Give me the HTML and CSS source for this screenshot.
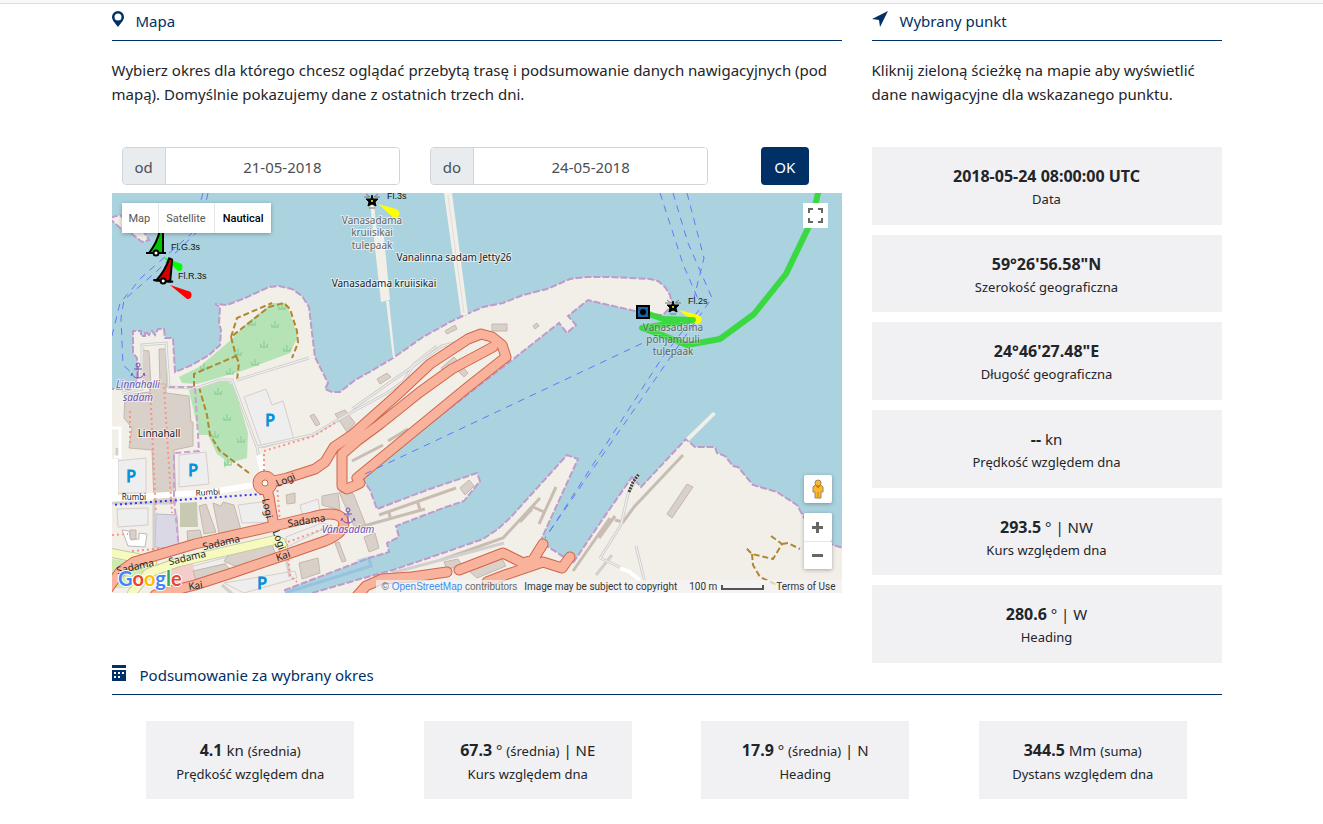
FILE: index.html
```html
<!DOCTYPE html>
<html lang="pl">

<head>
    <meta charset="utf-8">
    <title>Mapa</title>
    <link rel="stylesheet" href="styles.css">
</head>

<body>
    <div class="topbar"></div>
    <div class="container">
        <div class="columns">
            <div class="main">
                <h2 class="heading">
                    <svg class="icon" width="14" height="18" viewBox="0 0 14 18">
                        <path fill-rule="evenodd" d="M6 1a6 6 0 0 1 6 6c0 3-3 6-6 10C3 13 0 10 0 7a6 6 0 0 1 6-6zm0 2.500a3.500 3.500 0 1 0 0 7 3.500 3.500 0 0 0 0-7z" />
                    </svg>
                    <span>Mapa</span>
                </h2>
                <p class="intro">Wybierz okres dla którego chcesz oglądać przebytą trasę i podsumowanie danych nawigacyjnych (pod mapą). Domyślnie pokazujemy dane z ostatnich trzech dni.</p>
                <form class="period">
                    <div class="input-group">
                        <label for="from">od</label>
                        <input id="from" type="text" value="21-05-2018">
                    </div>
                    <div class="input-group">
                        <label for="to">do</label>
                        <input id="to" type="text" value="24-05-2018">
                    </div>
                    <div class="submit">
                        <button type="button">OK</button>
                    </div>
                </form>

                <div class="map">
                    <svg class="tiles" viewBox="0 0 730 400" preserveAspectRatio="xMidYMid slice">
                        <defs>
                            <path id="coast" d="M-5 196H18L25 188V165L21 160V138H29V143H33V138L37 142L40 138L43 142L46 136H52L53 145H61L63 179L80 172L97 162L108 152L109 137L107 130L108 114L103 111L115 112L133 105L157 94L167 93L180 96L190 103L197 114L200 140L203 164L213 184L216 190L213 196L220 199L228 199L243 187L261 177L281 165L311 144L338 129L355 121L371 114L391 110L411 102L435 96L458 86L475 84L498 84L538 86L546 88L553 94L558 102L560 112L551 122L536 121L488 110L476 107L456 123L464 132L455 140L447 130L400 167L265 272L251 287L258 297L265 316L315 297L365 280L368 288L352 308L331 315L284 333L287 344L275 350L277 359L257 365L173 397V405H-5z" />
                            <path id="south" d="M200 400L248 386L281 377L331 360L371 346L386 336L398 325L455 262L466 266L428 349L438 355L461 370L488 330L520 284L529 294L574 246L583 254L603 254L605 260L613 263L621 273L626 274L641 292L665 299L685 312L694 328L706 345L721 352L735 356V405H200z" />
                            <path id="roads" d="M153 290L175 285L203 276L213 269L222 254L240 242L285 202L318 171L356 146L369 141L380 144L390 152L394 164L356 194L245 285L248 290L242 293L235 296L230 293V261L245 248L268 231L308 199L340 176L381 154M153 290L157 304L162 334M-5 397L8 379L22 369L83 351L162 333L200 324Q230 316 232 330Q232 340 213 348L170 363L117 381L83 392L43 402M245 403L254 393L270 386L300 384L335 379M347 377L391 360L411 370M375 389L393 382L431 369L450 375L458 364M411 370L421 367L431 351" />
                            <path id="yellow" d="M-5 359L25 365L40 370M20 400L36 380L67 369L115 358L163 347L169 349L172 358" />
                            <g id="grass" class="grass">
                                <path d="M-4 3H4M-2 3L-4 0M0 3V-3M2 3L4 0" />
                            </g>
                            <g id="anchor" class="anchor">
                                <circle cy="-6" r="2" />
                                <path d="M0-4V7M-4-2H4M-6 2Q-5 7 0 7Q5 7 6 2M-6 2L-7 5M6 2L7 5" />
                            </g>
                            <g id="beacon">
                                <path class="rays" d="M-8-4L-3-4M8-4L3-4M-6-7L-2-4M6-7L2-4M-3 7H3" />
                                <path class="star" d="M0-6L1-2H6L3 1L4 5L0 3L-4 5L-3 1L-6-2H-1z" />
                                <circle r="1" fill="#ff0" />
                            </g>
                            <g id="buoy">
                                <path d="M4-14L7-13L7 9H-7Q1-1 4-14z" />
                                <path d="M-10 9H10" />
                                <circle cy="9" r="2.500" fill="#fff" />
                            </g>
                        </defs>

                        <rect width="730" height="400" fill="#aad3df" />
                        <path class="coast" d="M-3 25L8 35L20 41L30 49L37 47L32 39L22 35L8 22z" />
                        <use href="#coast" class="coast" />
                        <use href="#south" class="coast" />

                        <!-- jetties -->
                        <g fill="#f2efe9">
                            <path d="M258 10L262 10L265 40L272 44L278 107L269 109z" />
                            <path d="M274 108L277 108L283 165H281z" />
                            <path d="M332 0H340L356 122H349z" />
                            <path d="M574 245L601 219L604 221L577 248z" />
                        </g>
                        <path d="M336 3L352 120" fill="none" stroke="#ddd" />

                        <!-- parks -->
                        <g fill="#b5e3b5">
                            <path d="M67 184L87 174L119 147L135 130L160 110L174 110L186 143L178 160L130 178L85 191L70 190z" />
                            <path d="M77 197L95 190L115 187L122 193L136 240L135 265L117 270L112 275V266L105 261L96 242H87z" />
                        </g>
                        <use href="#grass" x="170" y="113" /><use href="#grass" x="140" y="129" />
                        <use href="#grass" x="163" y="131" /><use href="#grass" x="152" y="151" />
                        <use href="#grass" x="175" y="155" /><use href="#grass" x="126" y="159" />
                        <use href="#grass" x="143" y="169" /><use href="#grass" x="92" y="173" />
                        <use href="#grass" x="118" y="178" /><use href="#grass" x="106" y="198" />
                        <use href="#grass" x="115" y="224" /><use href="#grass" x="129" y="246" />
                        <use href="#grass" x="103" y="241" /><use href="#grass" x="116" y="269" />
                        <g class="footpath">
                            <path d="M82 194V181L124 163L119 144L157 114L172 110L178 116L185 138L186 150L180 165M124 163L127 170L125 187M119 144L125 125L160 110M87 194L95 222L98 242L108 258L137 280" />
                            <path d="M659 343L670 351L661 366L640 361L633 354M640 361L641 372L648 384L665 392M670 351L676 350L688 356" />
                        </g>

                        <!-- parking areas -->
                        <g class="parking">
                            <path d="M132 204L154 196L160 212L171 208L182 246L150 255z" />
                            <path d="M4 268L34 265V300H4z" />
                            <path d="M67 262L94 259L97 291L67 294z" />
                            <path d="M5 316L36 315V332L6 334z" />
                            <path d="M126 312L158 308L161 329L130 330z" />
                            <path d="M188 312L206 306L208 318L190 321z" />
                            <path d="M112 390L183 378L185 385L132 400z" />
                            <path d="M78 374L115 364V370L79 379z" />
                            <path d="M174 344L210 330L219 332L175 354z" />
                        </g>
                        <path d="M60 370L80 367L85 388L58 392z" fill="#f3cdc9" />
                        <path d="M0 366L28 370L38 385L20 395H0z" fill="#cdebb0" />
                        <path d="M68 310L85 309L86 334H68z" fill="#c8c9b2" />
                        <path d="M44 321L65 322L67 358L43 354z" fill="#d9d8e4" stroke="#bbb9c8" />
                        <path d="M10 337L17 338L19 347L27 346V340L35 341L33 354L16 353z" fill="#fff" stroke="#bbb" />

                        <!-- buildings -->
                        <g class="building">
                            <path d="M18 337H24V346H18z" />
                            <path d="M30 157L37 158L39 193L31 191z" />
                            <path d="M47 156H54L55 194H48z" />
                            <path d="M13 202L38 199V191H54V200L77 203L79 229H81V253L62 257L64 310H42L40 257L17 255L20 235L12 225z" />
                            <path d="M87 313L94 311L104 339L92 341z" />
                            <path d="M101 310L109 313L111 309L122 312L129 337L107 340z" />
                            <path d="M75 338L88 337L91 350L76 351z" />
                            <path d="M118 360L160 352L164 362L125 374L112 368z" />
                            <path d="M81 378L113 371L120 378L84 387z" />
                            <path d="M174 302L183 300L183 310L175 311z" />
                            <path d="M210 303L226 300L228 317L210 312z" />
                            <path d="M227 299L241 300L255 335L242 333z" />
                            <path d="M187 370L206 365L208 380L190 386z" />
                            <path d="M252 344L263 340L267 355L257 359z" />
                            <path d="M223 350L227 349L234 368L230 369z" />
                            <path d="M223 221L233 217L243 230L235 239z" />
                            <path d="M198 223L202 221L208 231L204 233z" />
                            <path d="M265 186L275 180L279 184L268 191z" />
                            <path d="M333 138L343 132L345 136L335 141z" />
                            <path d="M380 131H395V138H380z" />
                            <path d="M421 133L425 130L427 133L423 136z" />
                            <path d="M329 175L342 164L356 180L352 184L345 177L332 180z" />
                            <path d="M348 295L357 287L362 293L353 302z" />
                            <path d="M332 369L346 366L350 373L335 376z" />
                            <path d="M357 378L390 366L394 373L365 385z" />
                            <path d="M555 321L575 291L581 294L560 325z" />
                        </g>
                        <g class="pier">
                            <path d="M267 322L344 295M248 334L313 316M277 320L279 327M306 310L308 317" />
                            <path d="M329 367L391 345L428 305M427 331L444 294M421 314L432 319M408 329L420 316" />
                            <path d="M487 345L503 323M503 327L511 329L522 314L571 262M461 378L498 325" />
                            <path d="M240 268L271 252M276 248L296 236" />
                        </g>

                        <!-- minor streets -->
                        <g class="street-casing">
                            <path d="M5 310V255M10 200L30 196V152L54 150L57 194L85 195L108 187L120 187L145 254L200 242L238 220L275 200L292 188L302 171L325 153M125 187L197 165M240 216L330 153L350 148M145 254L150 285M42 310V385L20 384M0 310L60 310" />
                            <path d="M488 365L509 332L516 301L527 281M488 365L520 380L530 394M524 353L533 390" />
                            <path d="M110 392L125 405M280 380L392 350M500 362L484 382M178 384L172 355" />
                        </g>
                        <g class="street-casing inner">
                            <path d="M10 200L30 196V152L54 150L57 194L85 195L108 187L120 187L145 254L200 242L238 220L275 200L292 188L302 171L325 153M125 187L197 165M240 216L330 153L350 148M145 254L150 285" />
                            <path d="M488 365L509 332L516 301L527 281M488 365L520 380L530 394M524 353L533 390" />
                        </g>
                        <path d="M517 299L521 289L527 281" class="bridge" />
                        <path d="M0 235H8V264H2" fill="none" stroke="#fff" stroke-width="3" />
                        <g class="street">
                            <path d="M-3 306L40 303L100 299L147 291M147 262L153 290M3 305V266" />
                        </g>
                        <path d="M508 375L518 379L528 388" fill="none" stroke="#fff" stroke-width="4" />
                        <g class="steps">
                            <path d="M18 218V250M38 195L44 320M52 194L60 320M152 288V258L202 243L226 228M165 292L168 330M175 351L178 383L185 389M176 349L222 332M0 342L16 341M20 358L65 354" />
                        </g>
                        <path d="M-2 312L150 301" class="cycle" />
                        <path d="M57 194H83L87 258L62 260V306L67 356L30 372" class="border" />

                        <!-- main roads -->
                        <use href="#yellow" class="yellow-casing" />
                        <use href="#yellow" class="yellow" />
                        <use href="#roads" class="road-casing" />
                        <circle cx="153" cy="290" r="12" fill="#f9b29c" stroke="#cf6649" />
                        <use href="#roads" class="road" />
                        <circle cx="153" cy="290" r="3" fill="#fff" stroke="#cf6649" />
                        <path d="M246 368L257 365L259 373L173 400" fill="none" stroke="#8aaee6" stroke-width="3" opacity=".5" />

                        <!-- ferry lines -->
                        <g class="ferry">
                            <path d="M96 0L88 36L45 78L12 107L9 125L11 172L20 180M91 0L80 40L30 84L8 110L0 143" />
                            <path d="M548 0L571 71L586 106M561 0L576 50L600 105L560 162L433 345M575 0L592 65L582 105M587 117L550 165L436 341" />
                            <path d="M253 281L272 272L533 149" />
                        </g>

                        <!-- navigation lights -->
                        <use href="#beacon" x="260" y="8" />
                        <use href="#beacon" x="561" y="114" />
                        <path d="M266 11L284 16A4 4 0 0 1 282 25z" fill="#ff0" />
                        <path d="M567 117L586 122A4 4 0 0 1 584 131z" fill="#ff0" />
                        <path d="M51 64L67 70A4 4 0 0 1 66 78z" fill="#0f0" />
                        <path d="M58 92L76 98A4 4 0 0 1 75 106z" fill="#f00" />
                        <g class="buoy">
                            <use href="#buoy" x="44" y="51" fill="#00c800" />
                            <use href="#buoy" transform="translate(52 79) rotate(5)" fill="#d40000" />
                        </g>

                        <!-- travelled track -->
                        <path d="M531 119L551 126L581 127L530 135L550 142L575 152L608 146L642 121L674 81L700 27L706 0" class="track" />

                        <g class="place">
                            <text x="260" y="31">Vanasadama</text>
                            <text x="260" y="43">kruiisikai</text>
                            <text x="260" y="56">tulepaak</text>
                            <g class="bare">
                                <text x="561" y="138">Vanasadama</text>
                                <text x="561" y="150">põhjamuuli</text>
                                <text x="561" y="162">tulepaak</text>
                            </g>
                        </g>
                        <g class="place dark">
                            <text x="342" y="68">Vanalinna sadam Jetty26</text>
                            <text x="272" y="94">Vanasadama kruiisikai</text>
                            <text x="47" y="244">Linnahall</text>
                        </g>
                        <g class="place harbour">
                            <text x="26" y="195">Linnahalli</text>
                            <text x="26" y="208">sadam</text>
                            <text x="236" y="340">Vanasadam</text>
                        </g>
                        <use href="#anchor" x="26" y="178" />
                        <use href="#anchor" x="236" y="323" />
                        <g class="parking-sign">
                            <text x="158" y="233">P</text>
                            <text x="81" y="283">P</text>
                            <text x="19" y="289">P</text>
                            <text x="150" y="396">P</text>
                        </g>
                        <g class="street-name">
                            <text transform="translate(175 290) rotate(-24)">Logi</text>
                            <text transform="translate(152 316) rotate(78)">Logi</text>
                            <text transform="translate(164 348) rotate(70)">Logi</text>
                            <text transform="translate(195 331) rotate(-9)">Sadama</text>
                            <text transform="translate(110 353) rotate(-13)">Sadama</text>
                            <text transform="translate(76 368) rotate(-13)">Sadama</text>
                            <text transform="translate(24 377) rotate(-13)">Sadama</text>
                            <text transform="translate(172 366) rotate(-18)">Kai</text>
                            <text transform="translate(84 396) rotate(-9)">Kai</text>
                            <text class="small" x="22" y="307">Rumbi</text>
                            <text class="small" transform="translate(96 302) rotate(-3)">Rumbi</text>
                        </g>
                        <g class="light">
                            <text x="275" y="6">Fl.3s</text>
                            <text x="59" y="57">Fl.G.3s</text>
                            <text x="66" y="86">Fl.R.3s</text>
                            <text x="576" y="111">Fl.2s</text>
                        </g>
                        <rect x="525" y="113" width="12" height="12" fill="#1463a8" stroke="#000" stroke-width="2" />
                        <circle cx="531" cy="119" r="3" />

                        <text class="google" x="6" y="393"><tspan fill="#4285f4">G</tspan><tspan fill="#ea4335">o</tspan><tspan fill="#fbbc05">o</tspan><tspan fill="#4285f4">g</tspan><tspan fill="#34a853">l</tspan><tspan fill="#ea4335">e</tspan></text>
                    </svg>

                    <div class="map-types">
                        <button type="button">Map</button>
                        <button type="button">Satellite</button>
                        <button type="button" class="active">Nautical</button>
                    </div>
                    <button type="button" class="fullscreen" aria-label="Fullscreen">
                        <svg width="15" height="15" viewBox="0 0 15 15">
                            <path d="M1 5V1H5M10 1H14V5M14 10V14H10M5 14H1V10" fill="none" stroke="#666" stroke-width="2" />
                        </svg>
                    </button>
                    <div class="map-controls">
                        <button type="button" aria-label="Street View">
                            <svg width="14" height="20" viewBox="0 0 14 20">
                                <g fill="#fbb829" stroke="#9a8760">
                                    <path d="M4 6H10L12 8V13H10V19H4V13H2V8z" />
                                    <circle cx="7" cy="4" r="3" />
                                </g>
                                <path d="M5 7H9L7 9zM7 13V19" fill="#e5762c" stroke="#c98419" />
                            </svg>
                        </button>
                        <div class="zoom">
                            <button type="button" aria-label="Zoom in">
                                <svg width="11" height="11" viewBox="0 0 11 11"><path d="M0 4H4V0H7V4H11V7H7V11H4V7H0z" fill="#666" /></svg>
                            </button>
                            <button type="button" aria-label="Zoom out">
                                <svg width="11" height="11" viewBox="0 0 11 11"><path d="M0 4H11V7H0z" fill="#666" /></svg>
                            </button>
                        </div>
                    </div>
                    <div class="attribution">
                        <span class="osm">© <a href="#">OpenStreetMap</a> contributors</span>
                        <span>Image may be subject to copyright</span>
                        <span class="scale">100 m <i></i></span>
                        <a href="#">Terms of Use</a>
                    </div>
                </div>
            </div>

            <div class="side">
                <h2 class="heading">
                    <svg class="icon" width="18" height="18" viewBox="0 0 18 18">
                        <path d="M16 1L8 17L7 10L0 9z" />
                    </svg>
                    <span>Wybrany punkt</span>
                </h2>
                <p class="intro">Kliknij zieloną ścieżkę na mapie aby wyświetlić dane nawigacyjne dla wskazanego punktu.</p>
                <div class="point">
                    <div class="card"><div><b>2018-05-24 08:00:00 UTC</b></div><small>Data</small></div>
                    <div class="card"><div><b>59°26'56.58"N</b></div><small>Szerokość geograficzna</small></div>
                    <div class="card"><div><b>24°46'27.48"E</b></div><small>Długość geograficzna</small></div>
                    <div class="card"><div><b>--</b> kn</div><small>Prędkość względem dna</small></div>
                    <div class="card"><div><b>293.5</b> ° | NW</div><small>Kurs względem dna</small></div>
                    <div class="card"><div><b>280.6</b> ° | W</div><small>Heading</small></div>
                </div>
            </div>
        </div>

        <h2 class="heading">
            <svg class="icon" width="18" height="18" viewBox="0 0 18 18">
                <path fill-rule="evenodd" d="M0 1H14V4H0zM0 6H14V17H0zM2 8V10H4V8zM6 8V10H8V8zM10 8V10H12V8zM2 12V14H4V12zM6 12V14H8V12z" />
            </svg>
            <span>Podsumowanie za wybrany okres</span>
        </h2>
        <div class="summary">
            <div class="card"><div><b>4.1</b> kn <small>(średnia)</small></div><small>Prędkość względem dna</small></div>
            <div class="card"><div><b>67.3</b> ° <small>(średnia)</small> | NE</div><small>Kurs względem dna</small></div>
            <div class="card"><div><b>17.9</b> ° <small>(średnia)</small> | N</div><small>Heading</small></div>
            <div class="card"><div><b>344.5</b> Mm <small>(suma)</small></div><small>Dystans względem dna</small></div>
        </div>
    </div>
</body>

</html>
```
FILE: styles.css
```css
* {
    box-sizing: border-box;
}

body {
    margin: 0;
    font-family: "Noto Sans", "Open Sans", sans-serif;
    font-size: 15px;
    line-height: 24px;
    color: #212529;
    background-color: #fff;
}

button,
input {
    font-family: inherit;
}

.topbar {
    height: 4px;
    background-color: #f8f8f8;
    border-bottom: 1px solid #ddd;
}

.container {
    max-width: 1120px;
    margin: 0 auto;
    padding: 5px 0 24px 10px;
}

.columns {
    display: grid;
    grid-template-columns: 730fr 350fr;
    gap: 30px;
}

.heading {
    display: flex;
    align-items: center;
    gap: 10px;
    margin: 0;
    padding-bottom: 7px;
    border-bottom: 1px solid #003066;
    font-size: 15px;
    font-weight: normal;
    color: #003066;
}

.icon {
    fill: #003066;
    margin-bottom: 4px;
}

.intro {
    margin: 17px 0 41px;
}

/* period form */

.period {
    display: grid;
    grid-template-columns: 5fr 5fr 2fr;
    margin: 0 -5px 8px;
}

.input-group {
    display: flex;
    height: 38px;
    margin: 0 15px;
    border: 1px solid #ced4da;
    border-radius: 4px;
    overflow: hidden;
}

.input-group label {
    padding: 7px 12px;
    color: #495057;
    background-color: #e9ecef;
    border-right: 1px solid #ced4da;
}

.input-group input {
    flex: 1;
    min-width: 0;
    padding: 2px 0 0;
    border: none;
    font-size: 15px;
    text-align: center;
    color: #495057;
}

.submit {
    text-align: center;
}

.submit button {
    height: 38px;
    width: 48px;
    padding: 2px 0 0;
    border: none;
    border-radius: 4px;
    font-size: 15px;
    color: #fff;
    background-color: #003066;
}

/* map */

.map {
    position: relative;
    height: 400px;
    overflow: hidden;
    font-family: Roboto, sans-serif;
}

.map button {
    display: flex;
    align-items: center;
    justify-content: center;
    padding: 0;
    border: none;
    background-color: #fff;
    cursor: pointer;
}

.tiles {
    display: block;
    width: 100%;
    height: 100%;
}

.coast {
    fill: #f2efe9;
    stroke: #c09acb;
    stroke-width: 2;
    stroke-dasharray: 7 2;
}

.border {
    fill: none;
    stroke: #c9a0d0;
    stroke-width: 2;
    stroke-dasharray: 6 3;
}

.grass {
    fill: none;
    stroke: #86cb93;
}

.footpath {
    fill: none;
    stroke: #b08630;
    stroke-width: 2;
    stroke-dasharray: 6 3;
}

.parking {
    fill: #eee;
    stroke: #d9cccb;
}

.building {
    fill: #d9d0c9;
    stroke: #c4b8ad;
}

.pier {
    fill: none;
    stroke: #c9bcb3;
    stroke-width: 3;
}

.street-casing {
    fill: none;
    stroke: #d2d0ce;
    stroke-width: 3;
}

.street-casing.inner {
    stroke: #f4f4f4;
    stroke-width: 1;
}

.street {
    fill: none;
    stroke: #fff;
    stroke-width: 6;
}

.bridge {
    fill: none;
    stroke: #444;
    stroke-width: 3;
    stroke-dasharray: 2 1;
}

.steps {
    fill: none;
    stroke: #fa9488;
    stroke-width: 2;
    stroke-dasharray: 2 3;
}

.cycle {
    stroke: #3333f5;
    stroke-width: 2;
    stroke-dasharray: 2 3;
}

.road,
.road-casing,
.yellow,
.yellow-casing {
    fill: none;
    stroke-linejoin: round;
    stroke-linecap: round;
}

.road {
    stroke: #f9b29c;
    stroke-width: 9;
}

.road-casing {
    stroke: #cf6649;
    stroke-width: 11;
}

.yellow {
    stroke: #f7fabf;
    stroke-width: 8;
}

.yellow-casing {
    stroke: #c5c99a;
    stroke-width: 10;
}

.ferry {
    fill: none;
    stroke: #6676fb;
    stroke-dasharray: 7 6;
}

.anchor {
    fill: none;
    stroke: #7356b8;
}

.star {
    stroke: #000;
}

.rays {
    stroke: #777;
}

.buoy {
    stroke: #000;
    stroke-width: 2;
}

.place,
.street-name {
    font-family: "Noto Sans", sans-serif;
    font-size: 10px;
    text-anchor: middle;
    fill: #666;
    stroke: #fff;
    stroke-opacity: 0.6;
    stroke-width: 2;
    paint-order: stroke;
}

.bare {
    stroke-opacity: 0.2;
}

.dark {
    fill: #222;
}

.harbour {
    font-style: italic;
    fill: #6b4fb3;
}

.street-name {
    fill: #222;
    stroke: none;
}

.street-name .small {
    font-size: 8px;
}

.parking-sign {
    font-family: "Noto Sans", sans-serif;
    font-size: 16px;
    text-anchor: middle;
    fill: #0092da;
    stroke: #0092da;
}

.light {
    font-family: "Liberation Sans", sans-serif;
    font-size: 9px;
    fill: #111;
}

.track {
    fill: none;
    stroke: #27d927;
    stroke-opacity: 0.85;
    stroke-width: 6;
    stroke-linejoin: round;
    stroke-linecap: round;
}

.google {
    font-family: Lato, sans-serif;
    font-size: 20px;
    font-weight: bold;
    stroke: #fff;
    stroke-width: 2;
    paint-order: stroke;
}

.map-types {
    position: absolute;
    top: 10px;
    left: 10px;
    display: flex;
    border-radius: 2px;
    box-shadow: 0 1px 4px rgba(0, 0, 0, 0.3);
}

.map .map-types button {
    height: 30px;
    padding: 0 8px 0 7px;
    font-size: 11px;
    color: #565656;
    border-right: 1px solid #e6e6e6;
}

.map .map-types .active {
    padding: 0 8px;
    font-weight: 500;
    color: #000;
    border-right: none;
}

.map .fullscreen {
    position: absolute;
    top: 10px;
    right: 14px;
    width: 25px;
    height: 25px;
}

.map-controls {
    position: absolute;
    right: 10px;
    bottom: 24px;
    display: flex;
    flex-direction: column;
    gap: 10px;
}

.map .map-controls button {
    width: 28px;
    height: 28px;
    border-radius: 2px;
}

.map-controls > button,
.zoom {
    box-shadow: 0 1px 4px rgba(0, 0, 0, 0.3);
}

.zoom button + button {
    border-top: 1px solid #e6e6e6;
}

.attribution {
    position: absolute;
    right: 0;
    bottom: 0;
    display: flex;
    gap: 12px;
    padding: 1px 6px 0;
    line-height: 12px;
    font-size: 10px;
    color: #333;
    background-color: rgba(245, 245, 245, 0.7);
}

.attribution a {
    color: #333;
    text-decoration: none;
}

.attribution .osm {
    margin-right: -5px;
    font-family: "Liberation Sans", sans-serif;
    color: #666;
}

.attribution .osm a {
    color: #3a8ef0;
}

.scale {
    display: flex;
    align-items: center;
    gap: 4px;
}

.scale i {
    width: 43px;
    height: 5px;
    border: 2px solid #555;
    border-top: none;
}

/* data cards */

.point {
    display: grid;
    grid-auto-rows: 1fr;
    gap: 10px;
    min-height: 516px;
}

.card {
    padding: 17px 8px 14px;
    text-align: center;
    background-color: #f1f1f4;
}

.card b {
    font-size: 16px;
}

.card small {
    font-size: 13px;
}

.card > small {
    display: block;
    line-height: 22px;
}

.summary {
    display: grid;
    grid-template-columns: repeat(4, 1fr);
    justify-items: center;
    margin-top: 26px;
}

.summary .card {
    width: 75%;
}
```
